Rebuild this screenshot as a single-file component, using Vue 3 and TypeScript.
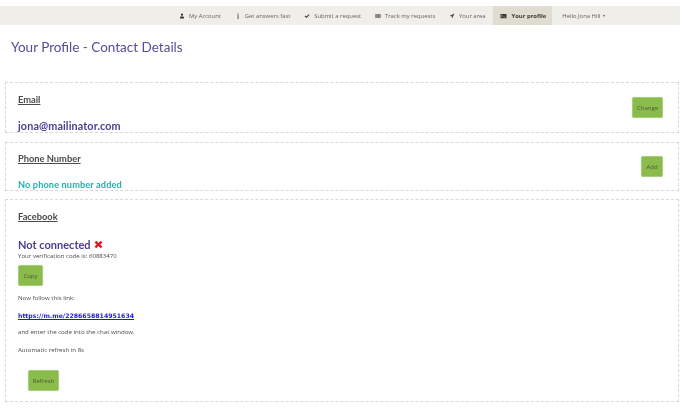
<script setup lang="ts">
interface NavItem { label: string; icon: string; active?: boolean }
const nav: NavItem[] = [
  { label: 'My Account', icon: 'user' },
  { label: 'Get answers fast', icon: 'info' },
  { label: 'Submit a request', icon: 'check' },
  { label: 'Track my requests', icon: 'table' },
  { label: 'Your area', icon: 'send' },
  { label: 'Your profile', icon: 'card', active: true }
]
</script>

<template>
  <div class="page">
    <nav class="topbar">
      <a v-for="n in nav" :key="n.label" class="nav-item" :class="{ active: n.active }">
        <svg class="ico" :class="'ico-' + n.icon" viewBox="0 0 12 12" aria-hidden="true">
          <path v-if="n.icon === 'user'" d="M6 1a2.2 2.2 0 0 1 2.2 2.6C8 5 7 6 6 6S4 5 3.8 3.6A2.2 2.2 0 0 1 6 1zM2 11V9c0-1.5 1.2-2.4 2.6-2.6L6 7.4l1.4-1C8.800 6.600 10 7.500 10 9v2z" />
          <path v-else-if="n.icon === 'info'" d="M5 1h2v2H5zM4.500 4.500H7V10h1v1.200H4.300V10h1V5.700h-.8z" />
          <path v-else-if="n.icon === 'check'" d="M1 6.300l1.600-1.500L5 7l4.400-4.500L11 4l-6 6z" />
          <path v-else-if="n.icon === 'table'" d="M1 2h10v8H1zM2 3v1.500h3.500V3zm4.500 0v1.500H10V3zM2 5.300v1.400h3.500V5.300zm4.500 0v1.400H10V5.300zM2 7.500V9h3.500V7.500zm4.500 0V9H10V7.500z" />
          <path v-else-if="n.icon === 'send'" d="M11 1L1 6l4.500.7L6 11z" />
          <path v-else d="M0 2h12v8.500H0zM1.500 4v1l2 1-2 1v1l3.500-2zM6 7.500V8.500h3V7.500z" />
        </svg>
        <span>{{ n.label }}</span>
      </a>
      <a class="nav-item hello">Hello Jona Hill <i class="caret"></i></a>
    </nav>

    <h1 class="title">Your Profile - Contact Details</h1>

    <section class="box box-email">
      <div class="row">
        <div class="col">
          <h2 class="label">Email</h2>
          <div class="value">jona@mailinator.com</div>
        </div>
        <button class="btn">Change</button>
      </div>
    </section>

    <section class="box box-phone">
      <div class="row">
        <div class="col">
          <h2 class="label">Phone Number</h2>
          <div class="value teal">No phone number added</div>
        </div>
        <button class="btn">Add</button>
      </div>
    </section>

    <section class="box box-fb">
      <h2 class="label">Facebook</h2>
      <div class="status">Not connected <svg class="cross" viewBox="0 0 10 10" aria-hidden="true"><path d="M2.500 .8L5 3.200 7.500.8 9.400 2.700 7 5l2.400 2.400-1.900 1.800L5 6.800 2.500 9.200.6 7.400 3 5 .6 2.700z" /></svg></div>
      <p class="small code">Your verification code is: 60883470</p>
      <button class="btn copy">Copy</button>
      <p class="small follow">Now follow this link:</p>
      <a class="link">https://m.me/2286658814951634</a>
      <p class="small enter">and enter the code into the chat window.</p>
      <p class="small auto">Automatic refresh in 8s</p>
      <button class="btn refresh">Refresh</button>
    </section>
  </div>
</template>

<style>
html, body { margin: 0; background: #fff; }
</style>

<style scoped>
.page {
  width: 688px;
  height: 411px;
  overflow: hidden;
  box-sizing: border-box;
  padding-top: 6px;
  font-family: "Open Sans", Lato, sans-serif;
  color: #444;
  background: #fff;
  filter: blur(0.6px);
}
.topbar {
  width: 680px;
  height: 19px;
  background: #f0eee9;
  display: flex;
  align-items: center;
  box-sizing: border-box;
  padding-left: 172px;
  font-size: 5.900px;
  color: #5f5f5f;
}
.nav-item {
  height: 100%;
  display: flex;
  align-items: center;
  gap: 4px;
  padding: 0 6.900px;
  white-space: nowrap;
}
.nav-item.active {
  background: #e0dccf;
  color: #3d3a36;
  font-weight: 700;
  padding: 0 6px;
}
.ico { width: 6px; height: 6px; fill: #3d3a36; flex: none; }
.ico-card { width: 9px; }
.hello { gap: 2px; padding-left: 10px; }
.caret {
  display: inline-block;
  width: 0;
  height: 0;
  border-left: 1.500px solid transparent;
  border-right: 1.500px solid transparent;
  border-top: 2px solid #555;
  margin-left: 1px;
}
.title {
  margin: 14px 0 0 11px;
  height: 36px;
  font-family: Lato, sans-serif;
  font-size: 13.500px;
  line-height: 17px;
  font-weight: 400;
  color: #5a4a97;
}
.box {
  width: 674px;
  box-sizing: border-box;
  margin-left: 5px;
  border: 1px dashed #d8d8d8;
  padding-left: 12px;
  padding-right: 15px;
}
.box-email { height: 51px; margin-top: 7px; }
.box-phone { height: 49px; margin-top: 9px; }
.box-fb { height: 203px; margin-top: 8px; padding-top: 11px; }
.row {
  display: flex;
  justify-content: space-between;
  align-items: center;
  height: 100%;
}
.col { align-self: flex-start; padding-top: 11px; }
.label {
  margin: 0;
  font-family: Lato, sans-serif;
  font-size: 9.300px;
  line-height: 11px;
  font-weight: 700;
  color: #4a4a4a;
  text-decoration: underline;
}
.value {
  margin-top: 15px;
  font-family: Lato, sans-serif;
  font-size: 10.800px;
  line-height: 11px;
  font-weight: 700;
  color: #4f3d8f;
  letter-spacing: 0.12px;
}
.value.teal { color: #1fb3ad; font-size: 9.200px; }
.box-phone .col { padding-top: 10px; }
.box-phone .value { margin-top: 15px; }
.status {
  margin-top: 16px;
  display: flex;
  align-items: center;
  gap: 3px;
  font-family: Lato, sans-serif;
  font-size: 11px;
  line-height: 13px;
  font-weight: 700;
  color: #4f3d8f;
}
.cross { width: 9px; height: 9px; fill: #e8141c; }
.small {
  margin: 0;
  font-size: 6.100px;
  line-height: 8px;
  color: #4a4a4a;
}
.code { margin-top: 1px; }
.btn {
  display: block;
  box-sizing: border-box;
  border: 1px solid #a6cf7c;
  border-radius: 2px;
  background: #8bbb4b;
  color: #4b5a33;
  font-family: inherit;
  font-size: 6px;
  padding: 0;
  height: 21px;
  box-shadow: 0 0 1px #c4d8ae;
}
.row .btn { width: 31px; flex: none; }
.box-phone .row .btn { width: 22px; }
.copy { width: 25px; margin-top: 5px; }
.follow { margin-top: 8px; }
.link {
  display: block;
  margin-top: 10px;
  font-family: "DejaVu Sans", sans-serif;
  font-size: 6.200px;
  line-height: 8px;
  font-weight: 700;
  color: #1a1ae0;
  text-decoration: underline;
}
.enter { margin-top: 8px; }
.auto { margin-top: 10px; }
.refresh { width: 31px; margin: 16px 0 0 10px; }
</style>
